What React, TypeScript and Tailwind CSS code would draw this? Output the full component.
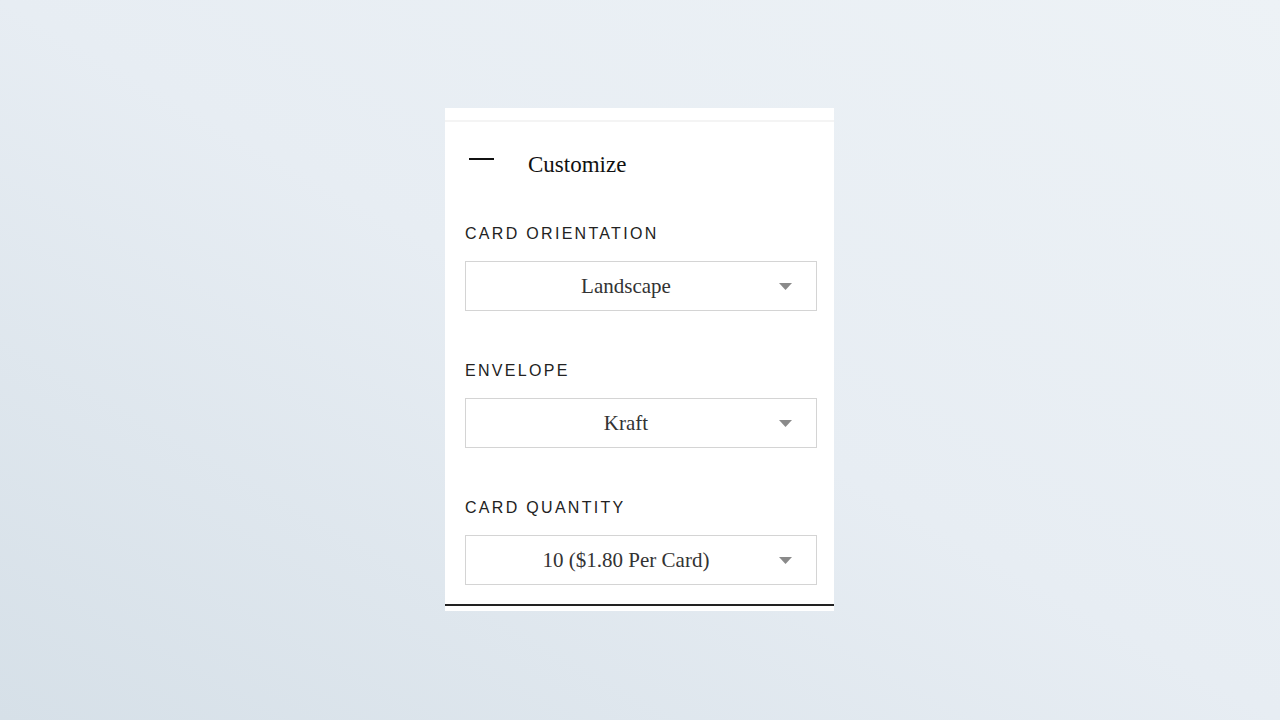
import { useState } from 'react';

const options = [
  { label: 'Card Orientation', value: 'Landscape' },
  { label: 'Envelope', value: 'Kraft' },
  { label: 'Card Quantity', value: '10 ($1.80 Per Card)' },
];

const serif = "font-['Liberation_Serif',_'Times_New_Roman',_serif]";

function SelectBox({ value }: { value: string }) {
  return (
    <button
      type="button"
      className="relative flex h-[50px] w-[352px] items-center border border-[#d4d4d4] bg-white pr-[30px]"
    >
      <span className={`flex-1 text-center text-[21px] leading-none text-[#333] ${serif}`}>
        {value}
      </span>
      {/* caret */}
      <svg className="absolute right-[24px] top-[21px]" width="13" height="7" viewBox="0 0 13 7">
        <path d="M0 0 H13 L6.5 7 Z" fill="#8a8a8a" />
      </svg>
    </button>
  );
}

export default function App() {
  const [open, setOpen] = useState(true);

  return (
    <div className="flex h-[720px] w-[1280px] bg-gradient-to-tr from-[#d6e0e8] via-[#e7edf3] to-[#edf2f6] pl-[445px] pt-[108px]">
      <div className="flex h-[503px] w-[389px] flex-col bg-white">
        {/* top strip */}
        <div className="h-[14px] border-b-2 border-[#f4f4f4]" />

        {/* accordion header */}
        <div
          className="flex h-[66px] cursor-pointer items-center pl-[24px] pt-[18px]"
          onClick={() => setOpen(!open)}
        >
          <span className="mb-[10px] block h-[2px] w-[25px] bg-[#111]" />
          <span className={`ml-[34px] text-[23px] leading-none text-[#111] ${serif}`}>Customize</span>
        </div>

        {open && (
          <div className="flex flex-col pl-[20px] pt-[36px]">
            {options.map((opt, i) => (
              <div key={opt.label} className={i > 0 ? 'mt-[50px]' : ''}>
                <div className="mb-[17px] h-[20px] font-['Liberation_Sans',_Arial,_sans-serif] text-[16px] leading-[20px] tracking-[2.3px] text-[#222] uppercase">
                  {opt.label}
                </div>
                <SelectBox value={opt.value} />
              </div>
            ))}
          </div>
        )}

        <div className="mt-auto mb-[5px] h-[2px] bg-[#222]" />
      </div>
    </div>
  );
}
